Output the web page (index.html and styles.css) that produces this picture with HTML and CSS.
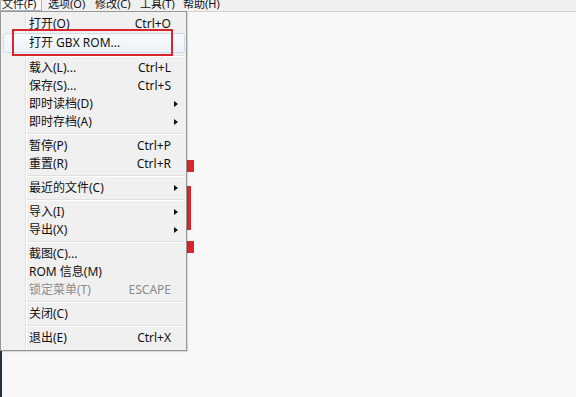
FILE: index.html
```html
<!DOCTYPE html>
<html lang="zh-CN">
<head>
  <meta charset="UTF-8">
  <title>GBX 文件菜单</title>
  <link rel="stylesheet" href="styles.css">
</head>
<body>

<div class="window">
  <div class="menubar">
    <span class="top active">文件(F)</span>
    <span class="top">选项(O)</span>
    <span class="top">修改(C)</span>
    <span class="top">工具(T)</span>
    <span class="top">帮助(H)</span>
  </div>

  <div class="content">
    <!-- 红色标注，被菜单挡住一部分 -->
    <div class="mark mark-a"></div>
    <div class="mark mark-b"></div>
    <div class="mark mark-c"></div>

    <ul class="menu">
      <li class="item"><span class="label">打开(O)</span><span class="key">Ctrl+O</span></li>
      <li class="item hover"><span class="label">打开 GBX ROM...</span></li>
      <li class="sep"></li>
      <li class="item"><span class="label">载入(L)...</span><span class="key">Ctrl+L</span></li>
      <li class="item"><span class="label">保存(S)...</span><span class="key">Ctrl+S</span></li>
      <li class="item sub"><span class="label">即时读档(D)</span></li>
      <li class="item sub"><span class="label">即时存档(A)</span></li>
      <li class="sep"></li>
      <li class="item"><span class="label">暂停(P)</span><span class="key">Ctrl+P</span></li>
      <li class="item"><span class="label">重置(R)</span><span class="key">Ctrl+R</span></li>
      <li class="sep"></li>
      <li class="item sub"><span class="label">最近的文件(C)</span></li>
      <li class="sep"></li>
      <li class="item sub"><span class="label">导入(I)</span></li>
      <li class="item sub"><span class="label">导出(X)</span></li>
      <li class="sep"></li>
      <li class="item"><span class="label">截图(C)...</span></li>
      <li class="item"><span class="label">ROM 信息(M)</span></li>
      <li class="item disabled"><span class="label">锁定菜单(T)</span><span class="key">ESCAPE</span></li>
      <li class="sep"></li>
      <li class="item"><span class="label">关闭(C)</span></li>
      <li class="sep"></li>
      <li class="item"><span class="label">退出(E)</span><span class="key">Ctrl+X</span></li>
    </ul>

    <div class="callout"></div>
  </div>
</div>

</body>
</html>
```

FILE: styles.css
```css
html, body {
  margin: 0;
  height: 100%;
}
body {
  font-family: "Noto Sans", "Noto Sans CJK SC", sans-serif;
  font-size: 12px;
  color: #111;
  background: #f7f7f7;
  overflow: hidden;
}
.window {
  height: 100%;
  display: flex;
  flex-direction: column;
  border-left: 2px solid #25313f;
}

/* 顶部菜单栏（上面被截掉一点） */
.menubar {
  height: 11px;
  display: flex;
  background: #f0f0f0;
  border-bottom: 1px solid #d4d4d4;
  margin-left: -2px;
  overflow: hidden;
  font-size: 11px;
}
.top {
  height: 13px;
  margin-top: -2px;
  line-height: 12px;
  box-sizing: border-box;
  white-space: nowrap;
  overflow: hidden;
  flex: none;
}
.top:nth-child(1) { width: 42px; padding-left: 2px; }
.top:nth-child(2) { width: 47px; padding-left: 6px; }
.top:nth-child(3) { width: 46px; padding-left: 6px; }
.top:nth-child(4) { width: 42px; padding-left: 5px; }
.top:nth-child(5) { padding-left: 6px; }
.top.active {
  background: #f8f8f8;
  border: 1px solid #a9b3bd;
  border-top: none;
  padding-left: 1px;
}

.content {
  flex: 1;
  position: relative;
  background: #f8f8f8;
}

/* 下拉菜单 */
.menu {
  position: absolute;
  top: -1px;
  left: -2px;
  width: 187px;
  box-sizing: border-box;
  margin: 0;
  padding: 3px 0;
  list-style: none;
  border: 1px solid #979797;
  background: linear-gradient(to right, #f1f1f1 24px, #e2e3e3 24px, #e2e3e3 25px, #ffffff 25px, #ffffff 26px, #f0f0f0 26px);
  box-shadow: 1px 1px 1px rgba(0, 0, 0, 0.12);
  z-index: 2;
}
.item {
  position: relative;
  height: 18px;
  line-height: 18px;
  display: flex;
  padding: 0 15px 0 28px;
  white-space: nowrap;
}
.item .label { flex: 1; }
.item .key { text-align: right; }
.item.hover {
  height: 20px;
  line-height: 18px;
  margin: 0 1px 0 2px;
  padding-left: 25px;
  border: 1px solid #cfdcec;
  border-radius: 3px;
  box-sizing: border-box;
  background: linear-gradient(#f7f9fc, #eef3f9);
}
.item.disabled { color: #8b8b8b; }
.item.sub::after {
  content: "";
  position: absolute;
  right: 8px;
  top: 6px;
  border-left: 4px solid #111;
  border-top: 3.5px solid transparent;
  border-bottom: 3.5px solid transparent;
}
.sep {
  height: 0;
  margin: 2px 2px 2px 26px;
  border-top: 1px solid #e0e0e0;
  border-bottom: 1px solid #ffffff;
}

/* 红色标注 */
.mark {
  position: absolute;
  left: 185px;
  background: #d9272e;
  z-index: 1;
}
.mark-a { top: 148px; height: 12px; width: 7px; }
.mark-b { top: 174px; height: 44px; width: 4px; }
.mark-c { top: 229px; height: 12px; width: 7px; }
.callout {
  position: absolute;
  left: 10px;
  top: 17px;
  width: 161px;
  height: 27px;
  box-sizing: border-box;
  border: 2px solid #d9262d;
  z-index: 3;
}
```
